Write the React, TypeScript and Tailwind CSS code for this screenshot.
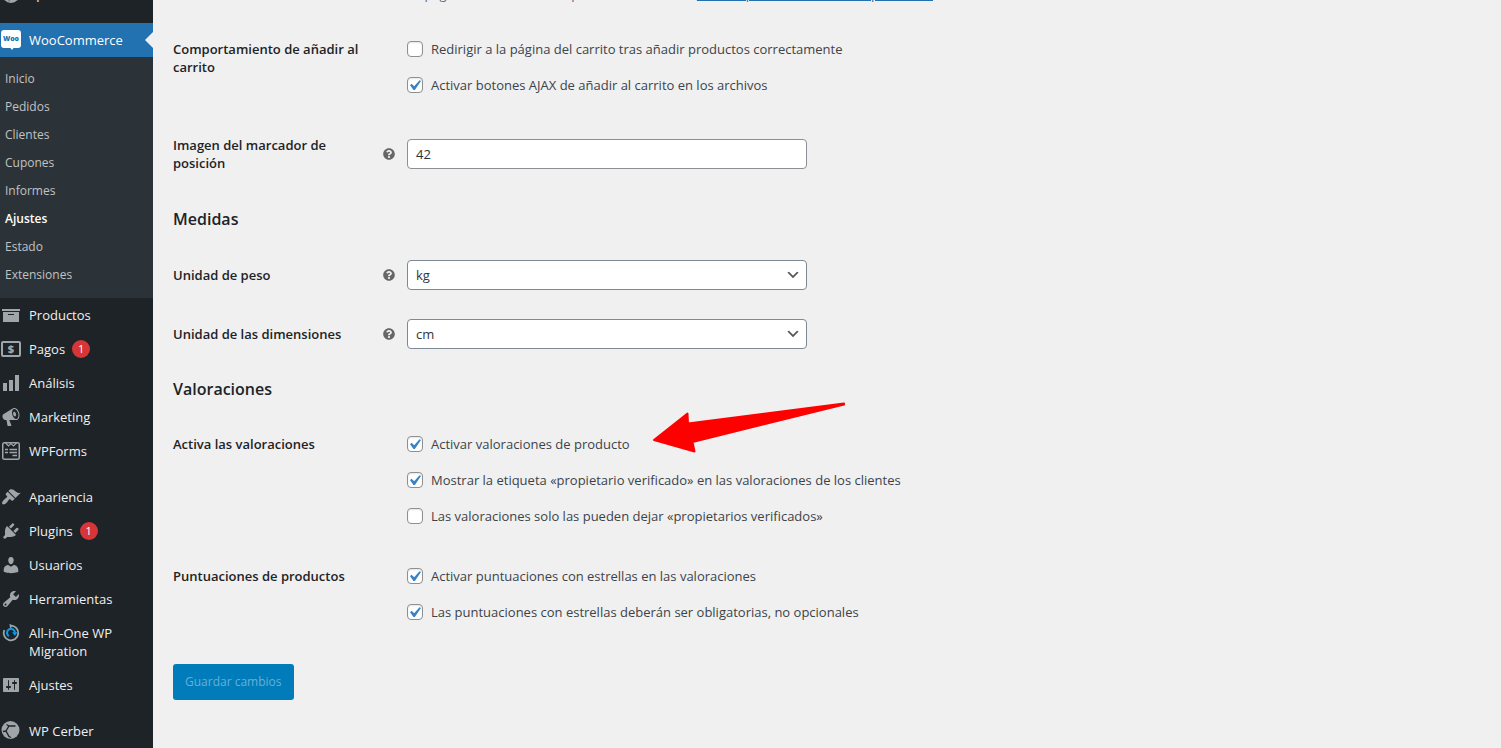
import type { ReactNode } from 'react'
import { FaQuestionCircle } from 'react-icons/fa'

interface MenuEntry {
  label: string
  icon: ReactNode
  count?: number
  spaced?: boolean
}

interface Option {
  id: string
  label: string
  checked: boolean
}

function Glyph({ d }: { d: string }) {
  return (
    <svg viewBox="0 0 20 20" className="size-5 shrink-0" fill="#a0a5aa" aria-hidden="true">
      <path d={d} />
    </svg>
  )
}

function SpectraIcon() {
  return (
    <svg viewBox="0 0 20 20" className="size-5 shrink-0" aria-hidden="true">
      <circle cx="10" cy="10" r="9" fill="#a0a5aa" />
      <path d="M8 18l1-4 4-2-1-4-5 3z" fill="#1d2327" />
    </svg>
  )
}

function WooIcon() {
  return (
    <svg viewBox="0 0 20 20" className="size-5 shrink-0" aria-hidden="true">
      <path d="M3 0h14a3 3 0 013 3v12a3 3 0 01-3 3h-4.500l-1.500 2-1.500-2H3a3 3 0 01-3-3V3a3 3 0 013-3z" fill="#fff" />
      <text x="10" y="11" textAnchor="middle" fontSize="7" fontWeight="800" fill="#2271b1">Woo</text>
    </svg>
  )
}

function PaymentsIcon() {
  return (
    <svg viewBox="0 0 20 20" className="size-5 shrink-0" aria-hidden="true">
      <rect x="1" y="3" width="18" height="14" rx="1" fill="none" stroke="#a0a5aa" strokeWidth="2" />
      <text x="10" y="14" textAnchor="middle" fontSize="11" fontWeight="800" fill="#a0a5aa">$</text>
    </svg>
  )
}

function WPFormsIcon() {
  return (
    <svg viewBox="0 0 20 20" className="size-5 shrink-0" fill="none" stroke="#a0a5aa" aria-hidden="true">
      <rect x="1.750" y="1.750" width="16.500" height="16.500" rx="1.500" strokeWidth="1.500" />
      <path d="M4.500 2l3 3L10 2.500 12.500 5l3-3" strokeWidth="1.200" />
      <path d="M4 8.500h3M8.500 8.500H16M4 11.500h3M8.500 11.500H16M11.500 14.500H16" strokeWidth="1.500" />
    </svg>
  )
}

function MigrationIcon() {
  return (
    <svg viewBox="0 0 20 20" className="size-5 shrink-0" fill="none" aria-hidden="true">
      <path d="M9.500 2.700A7.300 7.300 0 1 1 3.300 7" stroke="#a0a5aa" strokeWidth="1.800" />
      <path d="M8.500.8l3.300 2-2.700 2.600z" fill="#a0a5aa" />
      <path d="M7.800 13.200A4 4 0 1 1 14 9.500" stroke="#0f9be8" strokeWidth="2" />
      <path d="M11 9.300h5.500l-2.600 3.500z" fill="#0f9be8" />
    </svg>
  )
}

function CerberIcon() {
  return (
    <svg viewBox="0 0 20 20" className="size-5 shrink-0" aria-hidden="true">
      <circle cx="9.500" cy="9" r="9" fill="#a0a5aa" />
      <path d="M14.500 5H8L5 10l3 5.500 2 1M8 5L5.500 3.500M5 10l-3 .5" fill="none" stroke="#1d2327" strokeWidth="1.300" />
    </svg>
  )
}

const submenu = ['Inicio', 'Pedidos', 'Clientes', 'Cupones', 'Informes', 'Ajustes', 'Estado', 'Extensiones']

const menu: MenuEntry[] = [
  { label: 'Productos', icon: <Glyph d="M19 4v2H1V4h18zM2 7h16v10H2V7zm11 3V9H7v1h6z" /> },
  { label: 'Pagos', icon: <PaymentsIcon />, count: 1 },
  { label: 'Análisis', icon: <Glyph d="M18 18V2h-4v16h4zm-6 0V7H8v11h4zm-6 0v-8H2v8h4z" /> },
  {
    label: 'Marketing',
    icon: <Glyph d="M18.15 5.94c.46 1.62.38 3.22-.02 4.48-.42 1.28-1.26 2.18-2.3 2.48-.16.06-.26.06-.4.06-.06.02-.12.02-.18.02-.06.02-.14.02-.22.02h-6.8l2.22 5.5c.02.14-.06.26-.14.34-.08.1-.24.16-.34.16H6.95c-.1 0-.26-.06-.34-.16-.08-.08-.16-.2-.14-.34l-1-5.5H4.25l-.02-.02c-.5.06-1.08-.18-1.54-.62s-.88-1.08-1.06-1.88c-.24-.8-.2-1.56-.02-2.2.18-.62.58-1.08 1.06-1.3l.02-.02 9-5.4c.1-.06.18-.1.24-.16.06-.04.14-.08.24-.12.16-.08.28-.12.5-.18 1.04-.3 2.24.1 3.22.98s1.84 2.24 2.26 3.86zm-2.58 5.98h-.02c.4-.1.74-.34 1.04-.7.58-.7.86-1.76.86-3.04 0-.64-.1-1.3-.28-1.98-.34-1.36-1.02-2.5-1.78-3.24s-1.68-1.1-2.46-.88c-.82.22-1.4.96-1.7 2-.32 1.04-.28 2.36.06 3.72.38 1.36 1 2.5 1.8 3.24.78.74 1.62 1.1 2.48.88zm-2.54-7.08c.22-.04.42-.02.62.04.38.16.76.48 1.02 1s.42 1.2.42 1.78c0 .3-.04.56-.12.8-.18.48-.44.84-.86.94-.34.1-.8-.06-1.14-.4s-.64-.86-.78-1.5c-.18-.62-.12-1.24.02-1.72s.48-.84.82-.94z" />,
  },
  { label: 'WPForms', icon: <WPFormsIcon /> },
  {
    label: 'Apariencia',
    spaced: true,
    icon: <Glyph d="M14.48 11.06L7.41 3.99l1.5-1.5c.5-.56 2.3-.47 3.51.32 1.21.8 1.43 1.28 2.91 2.1 1.18.64 2.45 1.26 4.45.85zm-.71.71L6.7 4.7 4.93 6.47c-.39.39-.39 1.02 0 1.41l1.06 1.06c.39.39.39 1.03 0 1.42-.6.6-1.43 1.11-2.21 1.69-.35.26-.7.53-1.01.84C1.43 14.23.4 16.08 1.4 17.07c.99 1 2.84-.03 4.18-1.36.31-.31.58-.66.85-1.02.57-.78 1.08-1.61 1.69-2.21.39-.39 1.02-.39 1.41 0l1.06 1.06c.39.39 1.02.39 1.41 0z" />,
  },
  {
    label: 'Plugins',
    count: 1,
    icon: <Glyph d="M13.11 4.36L9.87 7.6 8 5.73l3.24-3.24c.35-.34 1.05-.2 1.56.32.52.51.66 1.21.31 1.55zm-8 1.77l.91-1.12 9.01 9.01-1.19.84c-.71.71-2.63 1.16-3.82 1.16H6.14L4.9 17.26c-.59.59-1.54.59-2.12 0-.59-.58-.59-1.53 0-2.12l1.24-1.24v-3.88c0-1.13.4-3.19 1.09-3.89zm7.26 3.97l3.24-3.24c.34-.35 1.04-.21 1.55.31.52.51.66 1.21.31 1.55l-3.24 3.25z" />,
  },
  {
    label: 'Usuarios',
    icon: <Glyph d="M10 9.25c-2.27 0-2.73-3.44-2.73-3.44C7 4.02 7.82 2 9.97 2c2.16 0 2.98 2.02 2.71 3.81 0 0-.41 3.44-2.68 3.44zm0 2.57L12.72 10c2.39 0 4.52 2.33 4.52 4.53v2.49s-3.65 1.13-7.24 1.13c-3.65 0-7.24-1.13-7.24-1.13v-2.49c0-2.25 1.94-4.48 4.47-4.48z" />,
  },
  {
    label: 'Herramientas',
    icon: <Glyph d="M16.68 9.77c-1.34 1.34-3.3 1.67-4.95.99l-5.41 6.52c-.99.99-2.59.99-3.58 0s-.99-2.59 0-3.57l6.52-5.42c-.68-1.65-.35-3.61.99-4.95 1.28-1.28 3.12-1.62 4.72-1.06l-2.89 2.89 2.82 2.82 2.86-2.87c.53 1.58.18 3.39-1.08 4.65zM3.81 16.21c.4.39 1.04.39 1.43 0 .4-.4.4-1.04 0-1.43-.39-.4-1.03-.4-1.43 0-.39.39-.39 1.03 0 1.43z" />,
  },
  { label: 'All-in-One WP Migration', icon: <MigrationIcon /> },
  {
    label: 'Ajustes',
    icon: <Glyph d="M18 16V4c0-.55-.45-1-1-1H3c-.55 0-1 .45-1 1v12c0 .55.45 1 1 1h14c.55 0 1-.45 1-1zM8 11h1c.55 0 1 .45 1 1s-.45 1-1 1H8v1.500c0 .28-.22.5-.5.5s-.5-.22-.5-.5V13H6c-.55 0-1-.45-1-1s.45-1 1-1h1V5.500c0-.28.22-.5.5-.5s.5.22.5.5V11zm5-2h-1c-.55 0-1-.45-1-1s.45-1 1-1h1V5.500c0-.28.22-.5.5-.5s.5.22.5.5V7h1c.55 0 1 .45 1 1s-.45 1-1 1h-1v5.500c0 .28-.22.5-.5.5s-.5-.22-.5-.5V9z" />,
  },
  { label: 'WP Cerber', icon: <CerberIcon />, spaced: true },
]

const cartOptions: Option[] = [
  { id: 'redirect', label: 'Redirigir a la página del carrito tras añadir productos correctamente', checked: false },
  { id: 'ajax', label: 'Activar botones AJAX de añadir al carrito en los archivos', checked: true },
]

const reviewOptions: Option[] = [
  { id: 'reviews', label: 'Activar valoraciones de producto', checked: true },
  { id: 'owner-label', label: 'Mostrar la etiqueta «propietario verificado» en las valoraciones de los clientes', checked: true },
  { id: 'owner-only', label: 'Las valoraciones solo las pueden dejar «propietarios verificados»', checked: false },
]

const ratingOptions: Option[] = [
  { id: 'stars', label: 'Activar puntuaciones con estrellas en las valoraciones', checked: true },
  { id: 'stars-required', label: 'Las puntuaciones con estrellas deberán ser obligatorias, no opcionales', checked: true },
]

function MenuItem({ entry }: { entry: MenuEntry }) {
  return (
    <li className={entry.spaced ? 'mt-3' : ''}>
      <a href="#" className="flex items-start gap-2 py-2 pl-px pr-3 text-[#f0f0f1]">
        <span className="-my-px shrink-0">{entry.icon}</span>
        <span>{entry.label}</span>
        {entry.count != null && (
          <span className="-ml-px flex size-[18px] items-center justify-center rounded-full bg-[#d63638] text-[11px] text-white">
            {entry.count}
          </span>
        )}
      </a>
    </li>
  )
}

function Sidebar() {
  return (
    <nav className="w-[153px] shrink-0 bg-[#1d2327] text-[13px] leading-[18px]">
      <ul className="-mt-[23px]">
        <MenuItem entry={{ label: 'Spectra', icon: <SpectraIcon /> }} />
        <li className="mt-3">
          <a href="#" className="relative flex items-start gap-2 bg-[#2271b1] py-2 pl-px text-white">
            <span className="-my-px shrink-0"><WooIcon /></span>
            <span>WooCommerce</span>
            <span className="absolute right-0 top-1/2 -translate-y-1/2 border-y-8 border-r-8 border-y-transparent border-r-[#f0f0f0]" />
          </a>
          <ul className="bg-[#2c3338] py-2 pb-[9px] text-xs">
            {submenu.map(label => (
              <li key={label}>
                <a
                  href="#"
                  className={`flex h-7 items-center pl-[5px] ${label === 'Ajustes' ? 'font-semibold text-white' : 'text-[#c0c2c4]'}`}
                >
                  {label}
                </a>
              </li>
            ))}
          </ul>
        </li>
        {menu.map(entry => <MenuItem key={entry.label} entry={entry} />)}
      </ul>
    </nav>
  )
}

function HelpTip() {
  return <FaQuestionCircle className="size-3 shrink-0 text-[#666]" aria-hidden="true" />
}

function FieldRow({ id, label, children }: { id: string; label: string; children: ReactNode }) {
  return (
    <div className="flex items-center">
      <div className="flex w-[234px] shrink-0 items-center justify-between pr-3">
        <label htmlFor={id} className="w-[190px] font-semibold text-[#1d2327]">{label}</label>
        <HelpTip />
      </div>
      {children}
    </div>
  )
}

function SelectField({ id, value }: { id: string; value: string }) {
  return (
    <div className="relative w-full max-w-[400px]">
      <select
        id={id}
        defaultValue={value}
        className="block h-[30px] w-full appearance-none rounded border border-[#7e8993] bg-white px-2 text-[#32373c]"
      >
        <option>{value}</option>
      </select>
      <svg viewBox="0 0 20 20" className="pointer-events-none absolute right-1.5 top-[7px] size-4" fill="#555" aria-hidden="true">
        <path d="M5 6l5 5 5-5 2 1-7 7-7-7 2-1z" />
      </svg>
    </div>
  )
}

function CheckboxGroup({ title, options, children }: { title: string; options: Option[]; children?: ReactNode }) {
  return (
    <div className="relative flex items-start" role="group" aria-label={title}>
      <div className="w-[234px] shrink-0">
        <p className="w-[200px] font-semibold text-[#1d2327]">{title}</p>
      </div>
      <div className="flex flex-col gap-[18px]">
        {options.map(o => (
          <label key={o.id} htmlFor={o.id} className="flex items-center gap-2">
            <span className="relative size-4 shrink-0">
              <input
                id={o.id}
                type="checkbox"
                defaultChecked={o.checked}
                className="peer block size-4 appearance-none rounded border border-[#8c8f94] bg-white shadow-[inset_0_1px_2px_rgba(0,0,0,0.1)]"
              />
              <svg
                viewBox="0 0 20 20"
                className="pointer-events-none invisible absolute -left-[3px] -top-0.5 size-[21px] peer-checked:visible"
                fill="#3582c4"
                aria-hidden="true"
              >
                <path d="M14.830 4.890l1.340.940-5.810 8.380H9.020L5.780 9.670l1.340-1.250 2.570 2.400z" />
              </svg>
            </span>
            <span>{o.label}</span>
          </label>
        ))}
      </div>
      {children}
    </div>
  )
}

function Arrow() {
  return (
    <svg viewBox="0 0 194 52" className="pointer-events-none absolute -top-[34px] left-[479px] h-[52px] w-[194px]" aria-hidden="true">
      <path
        d="M2 39L35.500 12.500 36 22.500 192 2.500 192 3.500 40.500 41 42.500 50.500z"
        fill="#f00"
        stroke="#f00"
        strokeWidth="2"
        strokeLinejoin="round"
      />
    </svg>
  )
}

export default function App() {
  return (
    <div className="flex h-screen overflow-hidden bg-[#f0f0f0] font-['Open_Sans','Noto_Sans',sans-serif] text-[13px] leading-[18px] text-[#3c434a]">
      <Sidebar />
      <main className="min-w-0 flex-1 px-5">
        <form>
          <p className="-mt-[15px] pl-[234px] text-[#646970]">
            La página base también se puede utilizar en los{' '}
            <a href="#" className="text-[#2271b1] underline">enlaces permanentes de tus productos</a>
          </p>

          <div className="mt-[37px] flex flex-col gap-[42px]">
            <CheckboxGroup title="Comportamiento de añadir al carrito" options={cartOptions} />
            <FieldRow id="placeholder-image" label="Imagen del marcador de posición">
              <input
                id="placeholder-image"
                type="text"
                defaultValue="42"
                className="h-[30px] w-full max-w-[400px] rounded border border-[#8c8f94] bg-white px-2 text-[#2c3338]"
              />
            </FieldRow>
          </div>

          <h2 className="mt-[35px] text-base leading-6 font-semibold text-[#1d2327]">Medidas</h2>
          <div className="mt-[29px] flex flex-col gap-[29px]">
            <FieldRow id="weight-unit" label="Unidad de peso">
              <SelectField id="weight-unit" value="kg" />
            </FieldRow>
            <FieldRow id="dimension-unit" label="Unidad de las dimensiones">
              <SelectField id="dimension-unit" value="cm" />
            </FieldRow>
          </div>

          <h2 className="mt-7 text-base leading-6 font-semibold text-[#1d2327]">Valoraciones</h2>
          <div className="mt-[34px] flex flex-col gap-[42px]">
            <CheckboxGroup title="Activa las valoraciones" options={reviewOptions}>
              <Arrow />
            </CheckboxGroup>
            <CheckboxGroup title="Puntuaciones de productos" options={ratingOptions} />
          </div>

          <button type="submit" disabled className="mt-[43px] h-9 rounded-[3px] bg-[#007cba] px-3 text-xs text-[#66b0d6]">
            Guardar cambios
          </button>
        </form>
      </main>
    </div>
  )
}
